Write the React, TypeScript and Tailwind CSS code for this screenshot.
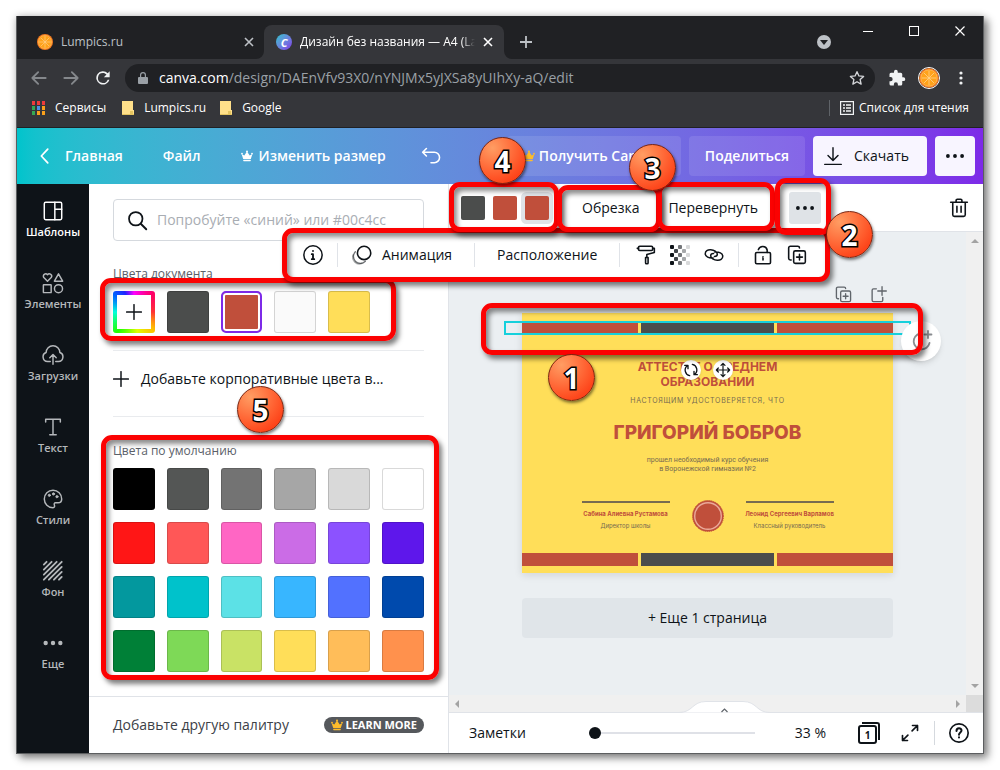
import React from "react";

// --- Icons ---
type IconProps = { className?: string; children?: React.ReactNode };

const Icon = ({ className = "h-6 w-6", children }: IconProps) => (
  <svg xmlns="http://www.w3.org/2000/svg" className={`shrink-0 ${className}`} viewBox="0 0 24 24" fill="none" stroke="currentColor" strokeWidth="1.6" strokeLinecap="round" strokeLinejoin="round" aria-hidden="true">
    {children}
  </svg>
);

const CrownIcon = ({ className = "" }) => (
  <svg className={`h-3 w-3 shrink-0 ${className}`} viewBox="0 0 12 12" fill="currentColor" aria-hidden="true">
    <path d="M2.2 9 .6 3.9l2.7 1.5L6 1.4l2.7 4 2.7-1.5L9.8 9Z" />
    <rect x="2.2" y="9.7" width="7.6" height="1.5" rx=".6" />
    <circle cx="1" cy="3.6" r=".9" />
    <circle cx="6" cy="1.4" r="1" />
    <circle cx="11" cy="3.6" r=".9" />
  </svg>
);

const OrangeIcon = ({ className = "" }) => (
  <svg className={`shrink-0 ${className}`} viewBox="0 0 22 22" aria-hidden="true">
    <circle cx="11" cy="11" r="11" fill="#f47b20" />
    <circle cx="11" cy="11" r="9" fill="#ffa21a" stroke="#ffc266" strokeWidth=".8" />
    <path d="M11 3v16M3 11h16M5.500 5.500l11 11M16.500 5.500l-11 11" stroke="#ffd08a" strokeWidth=".9" />
  </svg>
);

const CloseIcon = ({ className = "" }) => (
  <svg className={`h-[10px] w-[10px] shrink-0 ${className}`} viewBox="0 0 10 10" fill="none" stroke="currentColor" strokeWidth="1.6" aria-hidden="true">
    <path d="m1 1 8 8M9 1 1 9" />
  </svg>
);

const DotsIcon = ({ className = "h-6 w-6" }) => (
  <svg className={`shrink-0 ${className}`} viewBox="0 0 24 24" fill="currentColor" aria-hidden="true">
    <circle cx="3.500" cy="12" r="2.300" />
    <circle cx="12" cy="12" r="2.300" />
    <circle cx="20.500" cy="12" r="2.300" />
  </svg>
);

const DuplicateIcon = ({ className = "h-5 w-5" }) => (
  <Icon className={className}>
    <path d="M5 18H4a2 2 0 0 1-2-2V3.500a2 2 0 0 1 2-2h9a2 2 0 0 1 2 2" strokeWidth="1.900" />
    <rect x="8" y="7" width="14" height="15" rx="2" strokeWidth="1.900" />
    <path d="M15 11v7M11.500 14.500h7" strokeWidth="1.900" />
  </Icon>
);

const TransparencyIcon = () => (
  <svg className="h-5 w-5 shrink-0" viewBox="0 0 20 20" fill="#0e1318" aria-hidden="true">
    {[0, 1, 2, 3, 4].map((row) =>
      [0, 1, 2, 3, 4]
        .filter((col) => (row + col) % 2 === 0)
        .map((col) => <rect key={`${row}-${col}`} x={col * 4} y={row * 4} width="4" height="4" rx="1" opacity={1 - col * 0.21} />)
    )}
  </svg>
);

// --- Data ---
const DEFAULT_COLORS = [
  "#000000", "#545655", "#737373", "#a6a6a6", "#d9d9d9", "#ffffff",
  "#ff1616", "#ff5757", "#ff66c4", "#cb6ce6", "#8c52ff", "#5e17eb",
  "#03989e", "#00c2cb", "#5ce1e6", "#38b6ff", "#5271ff", "#004aad",
  "#008037", "#7ed957", "#c9e265", "#ffde59", "#ffbd59", "#ff914d",
];

const SIDE_ITEMS = [
  {
    label: "Шаблоны",
    icon: (
      <>
        <rect x="2.500" y="2.500" width="19" height="19" rx="1.500" />
        <path d="M14 2.500v19M14 10h7.500" />
      </>
    ),
  },
  {
    label: "Элементы",
    icon: (
      <>
        <path d="M6 10 2 6a2.500 2.500 0 0 1 4-3 2.500 2.500 0 0 1 4 3Z" />
        <path d="m18 2-4.500 8h9Z" />
        <rect x="1.500" y="14" width="8.500" height="8.500" rx=".5" />
        <circle cx="18" cy="18.200" r="4.400" />
      </>
    ),
  },
  {
    label: "Загрузки",
    icon: (
      <>
        <path d="M9 19H6a5 5 0 0 1-1.500-9.700 7.500 7.500 0 0 1 15 0A5 5 0 0 1 18 19h-3" />
        <path d="M12 22V12M8.500 15 12 11.500l3.500 3.500" />
      </>
    ),
  },
  { label: "Текст", icon: <path d="M4 6.500V3.500h16v3M12 3.500v17M8.500 20.500h7" /> },
  {
    label: "Стили",
    icon: (
      <>
        <path d="M12 21.500a9.500 9.500 0 1 1 9.500-9.500c0 3-2 4.200-4 4.200h-2.700c-1.500 0-1.800 1.300-1.300 2.300.6 1.300.2 3-1.500 3Z" />
        <g fill="currentColor" strokeWidth="1">
          <circle cx="8" cy="8" r="1.200" />
          <circle cx="12.500" cy="6.500" r="1.200" />
          <circle cx="16.300" cy="9.500" r="1.200" />
        </g>
      </>
    ),
  },
  { label: "Фон", icon: <path d="M2 5 5 2M2 10.500 10.500 2M2 16 16 2M2 21.500 21.500 2M7.500 21.500l14-14M13 21.500l8.500-8.500M18.500 21.500l3-3" strokeWidth="2" /> },
  {
    label: "Еще",
    icon: (
      <g fill="currentColor">
        <circle cx="4" cy="12" r="1.600" />
        <circle cx="12" cy="12" r="1.600" />
        <circle cx="20" cy="12" r="1.600" />
      </g>
    ),
  },
];

// --- Annotations ---
const Marker = ({ className = "" }) => (
  <div className={`pointer-events-none absolute rounded-[11px] border-[5px] border-[#fb0202] shadow-[3px_4px_5px_rgba(0,0,0,0.5),inset_3px_4px_5px_rgba(0,0,0,0.45)] ${className}`} />
);

const Step = ({ n, className = "" }: { n: number; className?: string }) => (
  <span className={`absolute z-30 flex h-[47px] w-[47px] items-center justify-center rounded-full border border-[#7a2410] bg-[radial-gradient(circle_at_28%_22%,#ff9d63,#ff5a2b_58%,#fb2a06)] text-[28px] leading-none font-bold text-white shadow-[1px_2px_3px_rgba(0,0,0,0.5)] [-webkit-text-stroke:3px_#000] [paint-order:stroke_fill] ${className}`}>
    {n}
  </span>
);

// --- Browser chrome ---
const BrowserChrome = () => (
  <div className="bg-[#35363a] text-xs text-white">
    <div className="flex h-[43px] bg-[#202124] pl-[7px]">
      <div className="mt-[9px] flex w-60 items-center gap-2 pr-[10px] pl-[13px] text-[#bdc1c6]">
        <OrangeIcon className="h-4 w-4" />
        <span className="flex-1">Lumpics.ru</span>
        <button aria-label="Закрыть вкладку"><CloseIcon /></button>
      </div>
      <div className="relative mt-[9px] flex w-60 items-center gap-2 rounded-t-lg bg-[#35363a] pr-[11px] pl-3">
        <svg className="absolute bottom-0 -left-2 h-2 w-2" viewBox="0 0 8 8" fill="#35363a"><path d="M8 0v8H0a8 8 0 0 0 8-8Z" /></svg>
        <svg className="absolute -right-2 bottom-0 h-2 w-2" viewBox="0 0 8 8" fill="#35363a"><path d="M0 0v8h8a8 8 0 0 1-8-8Z" /></svg>
        <span className="flex h-4 w-4 shrink-0 items-center justify-center rounded-full bg-linear-to-br from-[#00c4cc] to-[#7d2ae8] text-[11px] leading-none font-bold italic">C</span>
        <span className="flex-1 overflow-hidden [mask-image:linear-gradient(to_right,#000_92%,transparent)] whitespace-nowrap">Дизайн без названия — A4 (Landscape)</span>
        <button aria-label="Закрыть вкладку"><CloseIcon /></button>
      </div>
      <button className="mt-[9px] ml-4 text-[#bdc1c6]" aria-label="Новая вкладка">
        <svg className="h-3 w-3" viewBox="0 0 12 12" stroke="currentColor" strokeWidth="1.8"><path d="M6 0v12M0 6h12" /></svg>
      </button>
      <div className="ml-auto flex items-start pt-[10px] pr-[18px]">
        <button className="mt-[9px] mr-[32px] flex h-[14px] w-[14px] items-center justify-center rounded-full bg-[#bdc1c6]" aria-label="Поиск вкладок">
          <svg className="h-[6px] w-[8px]" viewBox="0 0 8 6" fill="#202124"><path d="M0 1h8L4 6Z" /></svg>
        </button>
        <svg className="h-[10px] w-[102px]" viewBox="0 0 102 10" fill="none" stroke="#fff" strokeWidth="1">
          <path d="M0 5.500h10" />
          <rect x="46.500" y=".5" width="9" height="9" />
          <path d="m92.500.5 9 9M101.500.5l-9 9" strokeWidth="1.200" />
        </svg>
      </div>
    </div>

    <div className="flex h-[37px] items-center pr-[14px] pl-[12px]">
      <button className="mr-3 text-[#85888c]" aria-label="Назад">
        <Icon className="h-5 w-5"><path d="M20 12H4M11 5l-7 7 7 7" strokeWidth="2.200" /></Icon>
      </button>
      <button className="mr-3 text-[#85888c]" aria-label="Вперед">
        <Icon className="h-5 w-5"><path d="M4 12h16M13 5l7 7-7 7" strokeWidth="2.200" /></Icon>
      </button>
      <button className="mr-3 text-[#f1f3f4]" aria-label="Обновить">
        <svg className="h-5 w-5" viewBox="0 0 24 24" fill="currentColor"><path d="M17.700 6.300A8 8 0 1 0 19.700 14h-2.100A6 6 0 1 1 12 6c1.700 0 3.100.7 4.200 1.800L13 11h7V4Z" /></svg>
      </button>
      <div className="flex h-7 flex-1 items-center rounded-full bg-[#202124] px-[10px]">
        <svg className="mr-[11px] ml-[3px] h-3 w-[10px]" viewBox="0 0 10 12" fill="#9aa0a6"><path d="M2 5V3a3 3 0 0 1 6 0v2h1a1 1 0 0 1 1 1v5a1 1 0 0 1-1 1H1a1 1 0 0 1-1-1V6a1 1 0 0 1 1-1Zm1.200 0h3.600V3a1.800 1.800 0 0 0-3.600 0Z" /></svg>
        <span className="flex-1 text-sm text-[#9aa0a6]"><span className="text-white">canva.com</span>/design/DAEnVfv93X0/nYNJMx5yJXSa8yUIhXy-aQ/edit</span>
        <Icon className="h-4 w-4 text-[#d5d7da]"><path d="m12 2.500 2.900 6.400 7 .7-5.200 4.700 1.500 6.900-6.200-3.600-6.200 3.600 1.500-6.900L2.100 9.600l7-.7Z" strokeWidth="2" /></Icon>
      </div>
      <svg className="ml-[13px] h-[18px] w-[18px] shrink-0" viewBox="0 0 24 24" fill="#f1f3f4"><path d="M20.500 11H19V7a2 2 0 0 0-2-2h-4V3.500a2.500 2.500 0 0 0-5 0V5H4a2 2 0 0 0-2 2v3.800h1.500a2.700 2.700 0 0 1 0 5.400H2V20a2 2 0 0 0 2 2h3.800v-1.500a2.700 2.700 0 0 1 5.400 0V22H17a2 2 0 0 0 2-2v-4h1.500a2.500 2.500 0 0 0 0-5Z" /></svg>
      <OrangeIcon className="ml-[12px] h-[22px] w-[22px] rounded-full border border-white" />
      <svg className="ml-[13px] h-4 w-4 shrink-0" viewBox="0 0 16 16" fill="#f1f3f4"><circle cx="8" cy="3" r="1.600" /><circle cx="8" cy="8" r="1.600" /><circle cx="8" cy="13" r="1.600" /></svg>
    </div>

    <div className="flex h-8 items-start border-b border-[#202124] pt-1 pr-[14px] pl-[15px]">
      <a href="#apps" className="mr-4 flex items-center gap-[10px]">
        <svg className="h-[14px] w-[13px]" viewBox="0 0 13 14">
          <path fill="#ee3b3b" d="M0 0h3v4H0zM5 0h3v4H5zM10 0h3v4h-3z" />
          <path fill="#34a853" d="M0 5h3v4H0zM0 10h3v4H0z" />
          <path fill="#4a90e2" d="M5 5h3v4H5z" />
          <path fill="#f9a01b" d="M10 5h3v4h-3zM5 10h3v4H5zM10 10h3v4h-3z" />
        </svg>
        Сервисы
      </a>
      {["Lumpics.ru", "Google"].map((label) => (
        <a key={label} href="#bookmark" className="mr-[14px] flex items-center gap-[10px]">
          <svg className="h-[14px] w-3" viewBox="0 0 12 14"><path fill="#ffe08a" d="M0 0h11v9h1v5H0Z" /><path fill="#d9b84f" d="M0 13h12v1H0zM8 10h3v3H8z" opacity=".7" /></svg>
          {label}
        </a>
      ))}
      <a href="#reading" className="ml-auto flex items-center border-l border-[#5f6368] pl-[10px]">
        <svg className="mr-[5px] h-[14px] w-[14px]" viewBox="0 0 14 14" fill="none" stroke="#f1f3f4" strokeWidth="1.200"><rect x=".6" y=".6" width="12.800" height="12.800" /><path d="M3 4h2M3 7h2M3 10h2M6 4h5M6 7h5M6 10h5" strokeWidth="1.600" /></svg>
        Список для чтения
      </a>
    </div>
  </div>
);

// --- Editor header ---
const CanvaHeader = () => (
  <header className="flex h-14 items-center bg-linear-to-r from-[#00c4cc] to-[#7d2ae8] pr-2 pl-[17px] text-sm font-semibold whitespace-nowrap text-white">
    <button className="flex items-center gap-[9px]">
      <Icon className="h-[22px] w-[22px]"><path d="m15 4.500-7 7.500 7 7.500" strokeWidth="1.900" /></Icon>
      Главная
    </button>
    <button className="ml-10">Файл</button>
    <button className="ml-10 flex items-center gap-[6px]"><CrownIcon />Изменить размер</button>
    <button className="ml-[35px]" aria-label="Отменить">
      <Icon className="h-5 w-5"><path d="M6.500 3 2 7.500 6.500 12M2.500 7.500H16a6 6 0 0 1 0 12.500h-4" strokeWidth="1.900" /></Icon>
    </button>
    <button className="ml-auto flex h-10 w-[174px] items-center gap-1 rounded bg-white/10 px-4">
      <CrownIcon className="text-[#fdbc2b]" />
      <span className="truncate">Получить Canva Pro</span>
    </button>
    <button className="ml-2 h-10 rounded bg-white/10 px-4">Поделиться</button>
    <button className="ml-2 flex h-10 items-center gap-[11px] rounded bg-[#f8f5ff] pr-[18px] pl-[10px] font-normal text-[#0e1318]">
      <Icon className="h-5 w-5"><path d="M12 2v15M6 11.500l6 6 6-6M2 22h20" strokeWidth="1.700" /></Icon>
      Скачать
    </button>
    <button className="ml-2 flex h-10 w-10 items-center justify-center rounded bg-[#f8f5ff] text-[#0e1318]" aria-label="Еще"><DotsIcon className="h-5 w-5" /></button>
  </header>
);

const SideNav = () => (
  <nav className="w-[72px] shrink-0 bg-[#0e1318]">
    {SIDE_ITEMS.map((item, i) => (
      <a key={item.label} href="#section" className={`flex h-[72px] flex-col items-center pt-4 text-[11px] leading-4 font-semibold ${i === 0 ? "text-white" : "text-[#b5b8bb]"}`}>
        <Icon className="mb-[2px] h-[22px] w-[22px]">{item.icon}</Icon>
        {item.label}
      </a>
    ))}
  </nav>
);

const Swatch = ({ color }: { color: string }) => (
  <button className="h-[42px] rounded-[3px] border border-black/15" style={{ backgroundColor: color }} aria-label={color} />
);

// --- Colour panel ---
const ColorPanel = () => (
  <section className="flex w-[360px] shrink-0 flex-col border-r border-[#e0e3e8] bg-white">
    <div className="flex-1 px-6 pt-[15px] pb-6 text-[#0e1318]">
      <label className="flex h-[42px] items-center gap-[9px] rounded border border-[#d5d9de] px-[13px]">
        <Icon className="h-[21px] w-[21px]"><circle cx="10" cy="10" r="7.700" strokeWidth="2" /><path d="m16 16 6 6" strokeWidth="2.200" /></Icon>
        <input className="w-full text-sm outline-none placeholder:text-[#a9adb3]" placeholder="Попробуйте «синий» или #00c4cc" aria-label="Поиск цвета" />
      </label>

      <h2 className="mt-[23px] text-xs leading-5 text-[#5a6068]">Цвета документа</h2>
      <div className="relative mt-[7px] grid grid-cols-6 gap-3">
        <button className="flex h-[42px] items-center justify-center rounded-[3px] bg-[conic-gradient(#f0f,#f06_45deg,#f33_90deg,#fb0_130deg,#dfff00_170deg,#2f0_220deg,#0fd_270deg,#06f_310deg,#22f_335deg,#f0f)]" aria-label="Новый цвет">
          <span className="flex h-[34px] w-[34px] items-center justify-center bg-white">
            <Icon className="h-4 w-4"><path d="M12 1v22M1 12h22" strokeWidth="2.200" /></Icon>
          </span>
        </button>
        <Swatch color="#4b4d4c" />
        <button className="h-[42px] rounded-[5px] border-2 border-[#7d2ae8] bg-[#c04f3b] shadow-[inset_0_0_0_2px_#fff]" aria-label="#c04f3b" />
        <Swatch color="#fafafa" />
        <Swatch color="#ffde59" />
        <Marker className="-top-[13px] right-[28px] -bottom-2 -left-[13px]" />
      </div>

      <div className="relative mt-[17px] border-y border-[#e9ebee] pb-[9px]">
        <button className="flex h-14 items-center gap-3 text-sm font-medium">
          <Icon className="h-4 w-4"><path d="M12 1v22M1 12h22" strokeWidth="2.200" /></Icon>
          Добавьте корпоративные цвета в...
        </button>
        <Step n={5} className="top-[35px] left-[124px]" />
      </div>

      <div className="relative mt-6">
        <h2 className="text-xs leading-5 text-[#5a6068]">Цвета по умолчанию</h2>
        <div className="mt-[7px] grid grid-cols-6 gap-3">
          {DEFAULT_COLORS.map((color) => <Swatch key={color} color={color} />)}
        </div>
        <Marker className="-top-[6px] -right-[15px] -bottom-2 -left-3" />
      </div>
    </div>
    <footer className="flex h-[57px] items-center justify-between border-t border-[#e0e3e8] px-6 text-sm text-[#3c4148]">
      Добавьте другую палитру
      <a href="#learn" className="flex h-4 items-center gap-[2px] rounded-full bg-[#55585c] px-[7px] text-[11px] font-bold text-white">
        <CrownIcon className="text-[#fdbc2b]" />
        LEARN MORE
      </a>
    </footer>
  </section>
);

// --- Element toolbar with the expanded second row ---
const ElementToolbar = () => (
  <div className="relative z-20 flex h-12 items-center border-b border-[#e0e3e8] bg-white pr-[14px] pl-3 text-sm text-[#0e1318]">
    <div className="flex gap-2">
      <button className="h-6 w-6 rounded-[2px] bg-[#4b4d4c]" aria-label="Цвет 1" />
      <button className="h-6 w-6 rounded-[2px] bg-[#c04f3b]" aria-label="Цвет 2" />
      <button className="h-6 w-6 rounded-[2px] bg-[#c04f3b] ring-4 ring-[#dfe3e7]" aria-label="Цвет 3" />
    </div>
    <button className="ml-[33px]">Обрезка</button>
    <button className="ml-[29px]">Перевернуть</button>
    <button className="ml-[31px] flex h-8 w-8 items-center justify-center rounded-[3px] bg-[#dfe3e7]" aria-label="Еще"><DotsIcon className="h-5 w-5" /></button>
    <button className="ml-auto" aria-label="Удалить">
      <Icon className="h-5 w-5"><path d="M2 5h20M8.500 5V3a1.500 1.500 0 0 1 1.500-1.500h4A1.500 1.500 0 0 1 15.500 3v2M4.500 5v15a2 2 0 0 0 2 2h11a2 2 0 0 0 2-2V5M9.500 10v7M14.500 10v7" strokeWidth="1.900" /></Icon>
    </button>

    <div className="absolute top-[44px] -left-[167px] flex h-[54px] items-center rounded-[11px] border-[5px] border-[#fb0202] bg-white pr-[18px] whitespace-nowrap shadow-[3px_4px_5px_rgba(0,0,0,0.5),inset_3px_4px_5px_rgba(0,0,0,0.45)]">
      <button className="pr-[14px] pl-4" aria-label="Информация">
        <Icon className="h-5 w-5"><circle cx="12" cy="12" r="11" strokeWidth="1.800" /><path d="M12 11v6M10.500 11H12M10.500 17h3M12 7v.3" strokeWidth="2.200" /></Icon>
      </button>
      <span className="h-6 w-px bg-[#e0e3e8]" />
      <button className="flex items-center gap-[10px] pr-[22px] pl-[14px]">
        <Icon className="h-5 w-5"><circle cx="14.500" cy="9.500" r="8" strokeWidth="1.900" /><path d="M4 8a8 8 0 0 0 12 11.500" opacity=".6" /><path d="M1.500 11.500A8 8 0 0 0 12 22" opacity=".35" /></Icon>
        Анимация
      </button>
      <span className="h-6 w-px bg-[#e0e3e8]" />
      <button className="px-[22px]">Расположение</button>
      <span className="h-6 w-px bg-[#e0e3e8]" />
      <div className="flex gap-[14px] pr-[14px] pl-4">
        <button aria-label="Копировать стиль"><Icon className="h-5 w-5"><rect x="3" y="1.500" width="17" height="5" rx="1.500" strokeWidth="1.900" /><path d="M3 4H1.500M20 4h2v5l-9 2.500V15M11.500 15h3v6.500a1 1 0 0 1-1 1h-1a1 1 0 0 1-1-1Z" strokeWidth="1.900" /></Icon></button>
        <button aria-label="Прозрачность"><TransparencyIcon /></button>
        <button aria-label="Ссылка"><Icon className="h-5 w-5"><path d="M11 15.500c-5 .5-9.500-1.500-9.500-5 0-3.500 3-5 6.500-4.800 4 .3 8 2.500 8 5.500 0 1.800-1.500 2.600-3.500 2.600M13 8.500c5-.5 9.500 1.500 9.500 5 0 3.500-3 5-6.500 4.800-4-.3-8-2.500-8-5.500 0-1.800 1.500-2.600 3.500-2.600" strokeWidth="1.800" /></Icon></button>
      </div>
      <span className="h-6 w-px bg-[#e0e3e8]" />
      <div className="flex gap-[14px] pl-[14px]">
        <button aria-label="Заблокировать"><Icon className="h-5 w-5"><rect x="3" y="9" width="18" height="13.500" rx="1.500" strokeWidth="1.900" /><path d="M6.500 5.500A5.500 5.500 0 0 1 17 6v3M12 15.500V18M12 14v.5" strokeWidth="1.900" /></Icon></button>
        <button aria-label="Дублировать"><DuplicateIcon /></button>
      </div>
    </div>

    <Marker className="-top-[2px] left-0 h-[50px] w-[110px]" />
    <Marker className="top-px left-[108px] h-[47px] w-[104px]" />
    <Marker className="-top-[2px] left-[208px] h-[49px] w-[118px]" />
    <Marker className="-top-[6px] left-[326px] h-[57px] w-[56px]" />
    <Step n={4} className="-top-[47px] left-[30px]" />
    <Step n={3} className="-top-[40px] left-[180px]" />
    <Step n={2} className="top-[27px] left-[377px]" />
  </div>
);

const Stripes = ({ className = "" }) => (
  <div className={`grid grid-cols-[116fr_133fr_116fr] gap-[3px] ${className}`}>
    <span className="bg-[#c04f3b]" />
    <span className="bg-[#4b4d4c]" />
    <span className="bg-[#c04f3b]" />
  </div>
);

const Signature = ({ name, role }: { name: string; role: string }) => (
  <div className="flex w-[88px] flex-col items-center border-t-2 border-[#776b50] pt-[5px] text-[6px] leading-3 whitespace-nowrap">
    <p className="font-bold text-[#c04f3b]">{name}</p>
    <p>{role}</p>
  </div>
);

const Certificate = () => (
  <article className="relative flex h-[260px] flex-col items-center bg-[#ffde59] pt-[10px] pb-[7px] font-[Inter,Roboto,sans-serif] text-[#776b50] shadow-[0_2px_8px_rgba(14,19,24,0.12)]">
    <Stripes className="h-[10px] w-full" />
    <h1 className="mt-[26px] text-center text-[12px] leading-[15px] font-bold text-[#c04f3b]">
      АТТЕСТАТ О СРЕДНЕМ<br />ОБРАЗОВАНИИ
    </h1>
    <p className="mt-[6px] text-[7px] leading-3 tracking-widest">НАСТОЯЩИМ УДОСТОВЕРЯЕТСЯ, ЧТО</p>
    <p className="mt-[14px] text-[19px] leading-6 font-extrabold text-[#c04f3b]">ГРИГОРИЙ БОБРОВ</p>
    <p className="mt-[11px] text-center font-[Roboto,sans-serif] text-[7px] leading-[9px]">прошел необходимый курс обучения<br />в Воронежской гимназии №2</p>
    <div className="mt-[26px] flex items-center gap-[22px]">
      <Signature name="Сабина Алиевна Рустамова" role="Директор школы" />
      <svg className="h-8 w-8" viewBox="0 0 32 32" fill="#c04f3b"><circle cx="16" cy="16" r="15.500" stroke="#c04f3b" strokeWidth="1" strokeDasharray="1 1" /><circle cx="16" cy="16" r="13.300" stroke="#eaa99a" strokeWidth="1.400" /></svg>
      <Signature name="Леонид Сергеевич Варламов" role="Классный руководитель" />
    </div>
    <Stripes className="mt-auto h-[13px] w-full" />

    <div className="absolute top-2 -right-[18px] -left-[18px] h-[14px] border-2 border-[#16d0dc]" />
    <button className="absolute top-[47px] left-[159px] flex h-5 w-5 items-center justify-center rounded-full bg-white text-[#0e1318] shadow" aria-label="Повернуть">
      <Icon className="h-4 w-4"><path d="M10 20.500A8.500 8.500 0 0 1 6.500 5.500M2.500 5h5v5M14 3.500a8.500 8.500 0 0 1 3.500 15M21.500 19h-5v-5" strokeWidth="2" /></Icon>
    </button>
    <button className="absolute top-[47px] left-[191px] flex h-5 w-5 items-center justify-center rounded-full bg-white text-[#0e1318] shadow" aria-label="Переместить">
      <Icon className="h-4 w-4"><path d="M12 2v20M2 12h20M9 5l3-3 3 3M9 19l3 3 3-3M5 9l-3 3 3 3M19 9l3 3-3 3" strokeWidth="1.800" /></Icon>
    </button>
    <button className="absolute top-2 -right-12 flex h-10 w-10 items-center justify-center rounded-full bg-white text-[#8a8d91] shadow-md" aria-label="Комментарий">
      <Icon className="h-6 w-6"><path d="M11 4.500a8 8 0 1 0 9.500 9.500M19 2v7M15.500 5.500h7" strokeWidth="1.800" /></Icon>
    </button>
    <Marker className="-top-[10px] -right-[30px] -left-[41px] h-[52px]" />
    <Step n={1} className="top-[41px] left-[26px] font-['Open_Sans','Noto_Sans',sans-serif]" />
  </article>
);

const ArrowHead = ({ d }: { d: string }) => (
  <svg className="h-2 w-2 shrink-0" viewBox="0 0 8 8" fill="#a3a3a3" aria-hidden="true"><path d={d} /></svg>
);

const Editor = () => (
  <main className="flex min-w-0 flex-1 flex-col">
    <ElementToolbar />
    <div className="flex flex-1">
      <div className="flex-1 bg-[#ebeff2] pt-[54px]">
        <div className="mx-auto w-[371px]">
          <div className="flex h-[27px] justify-end gap-[18px] pr-[6px] text-[#60656b]">
            <button className="flex" aria-label="Дублировать страницу"><DuplicateIcon className="h-[17px] w-[17px]" /></button>
            <button className="flex" aria-label="Добавить страницу"><Icon className="h-[17px] w-[17px]"><path d="M9 4H5a2 2 0 0 0-2 2v14a2 2 0 0 0 2 2h11a2 2 0 0 0 2-2v-4M17 1v12M11 7h12" strokeWidth="1.900" /></Icon></button>
          </div>
          <Certificate />
          <button className="mt-[25px] h-10 w-full rounded bg-[#e0e5e9] text-sm font-medium text-[#0e1318]">+ Еще 1 страница</button>
        </div>
      </div>
      <div className="flex w-[17px] flex-col items-center justify-between bg-[#f0f0f0] py-[5px]">
        <ArrowHead d="M0 6h8L4 2Z" />
        <ArrowHead d="M0 2h8L4 6Z" />
      </div>
    </div>
    <div className="relative flex h-[17px] items-center justify-between bg-[#f0f0f0] pl-1">
      <ArrowHead d="M6 0v8L2 4Z" />
      <div className="flex h-full items-center gap-1">
        <ArrowHead d="M2 0v8l4-4Z" />
        <span className="h-full w-[17px] bg-[#dcdcdc]" />
      </div>
      <button className="absolute -bottom-px left-[230px]" aria-label="Показать заметки">
        <svg className="h-3 w-[91px]" viewBox="0 0 91 12" fill="#fff">
          <path d="M0 11.500C14 11.500 13 .5 27 .5h37c14 0 13 11 27 11" stroke="#e0e3e8" />
          <path d="m42.500 11 3-3 3 3" fill="none" stroke="#60656b" strokeWidth="1.200" />
        </svg>
      </button>
    </div>
    <footer className="flex h-[41px] items-center border-t border-[#e0e3e8] bg-white pr-[14px] pl-5 text-sm text-[#0e1318]">
      <button className="font-medium">Заметки</button>
      <input
        type="range"
        min={10}
        max={500}
        defaultValue={10}
        aria-label="Масштаб"
        className="ml-auto w-[166px] appearance-none bg-transparent [&::-webkit-slider-runnable-track]:h-[2px] [&::-webkit-slider-runnable-track]:bg-[#dfe1e7] [&::-webkit-slider-thumb]:-mt-[5px] [&::-webkit-slider-thumb]:h-3 [&::-webkit-slider-thumb]:w-3 [&::-webkit-slider-thumb]:appearance-none [&::-webkit-slider-thumb]:rounded-full [&::-webkit-slider-thumb]:bg-[#0e1318]"
      />
      <span className="ml-10">33 %</span>
      <button className="relative ml-8 flex h-[22px] w-[22px] items-end" aria-label="Страницы">
        <span className="absolute top-0 right-0 h-[18px] w-[18px] rounded-tr-[3px] border-t-2 border-r-2 border-[#0e1318]" />
        <span className="flex h-[19px] w-[19px] items-center justify-center rounded-[3px] border-2 border-[#0e1318] text-[10px] leading-none font-bold">1</span>
      </button>
      <button className="ml-5" aria-label="Во весь экран">
        <Icon className="h-5 w-5"><path d="M14.500 9.500 21 3M15 3h6v6M9.500 14.500 3 21M9 21H3v-6" strokeWidth="2" /></Icon>
      </button>
      <span className="mx-[14px] h-6 w-px bg-[#d5d9de]" />
      <button aria-label="Справка">
        <Icon className="h-5 w-5"><circle cx="12" cy="12" r="11" strokeWidth="2" /><path d="M9 9.500c0-4 6-4 6-.5 0 2.300-3 2.300-3 5M12 17v.3" strokeWidth="2.400" /></Icon>
      </button>
    </footer>
  </main>
);

const App: React.FC = () => (
  <div className="min-h-screen min-w-[1000px] bg-white p-4 font-['Open_Sans','Noto_Sans',sans-serif]">
    <div className="border-x border-b border-[#5c5e60] shadow-[4px_4px_8px_rgba(0,0,0,0.45),0_0_8px_rgba(0,0,0,0.2)]">
      <BrowserChrome />
      <CanvaHeader />
      <div className="flex">
        <SideNav />
        <ColorPanel />
        <Editor />
      </div>
    </div>
  </div>
);

export default App;
